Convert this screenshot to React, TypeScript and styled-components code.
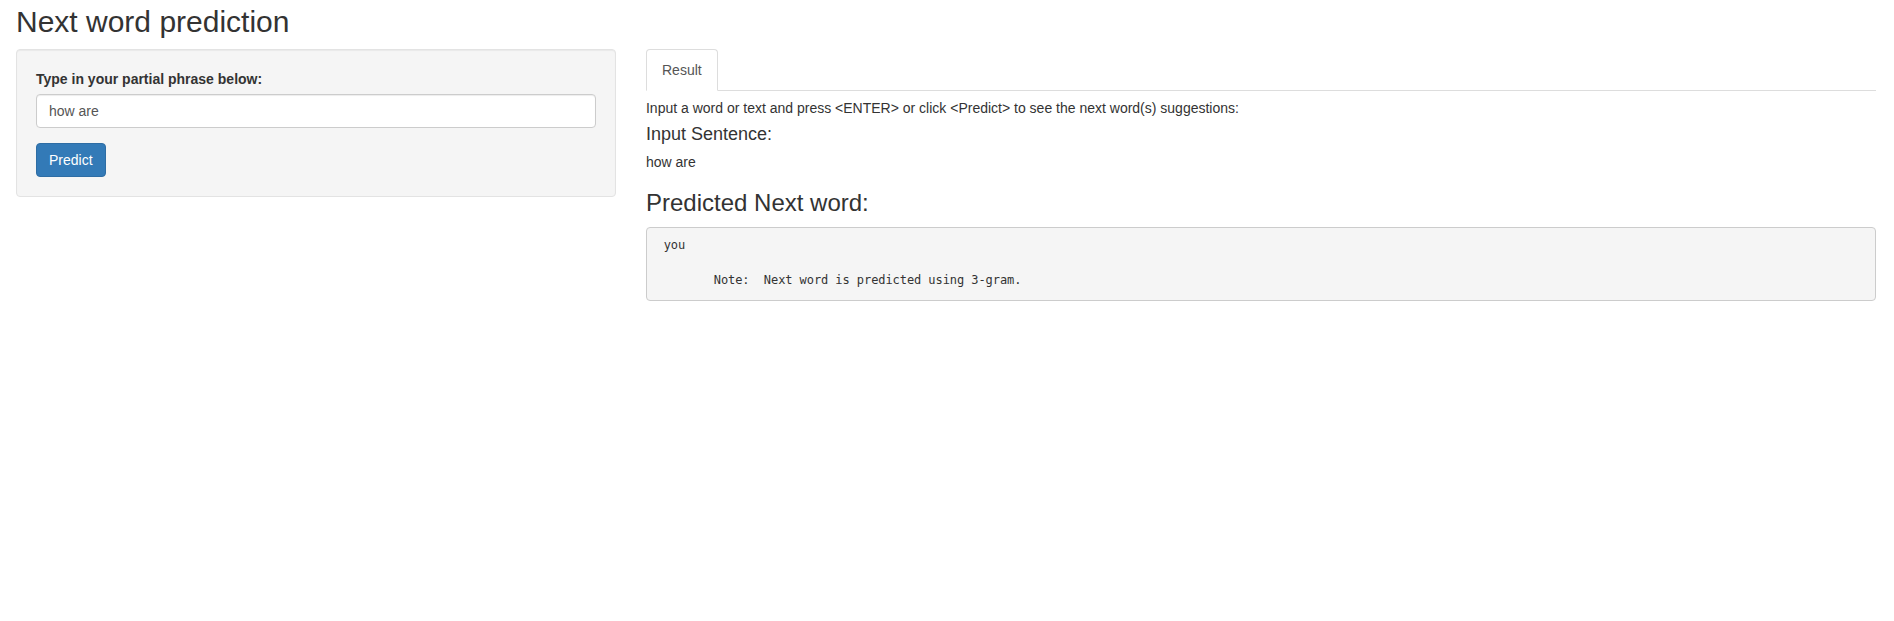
import React from "react";
import styled, { createGlobalStyle } from "styled-components";

const GlobalStyle = createGlobalStyle`
  * { box-sizing: border-box; }
  html, body { margin: 0; padding: 0; background: #fff; }
  body {
    font-family: "Liberation Sans", Arial, Helvetica, sans-serif;
    font-size: 14px;
    line-height: 1.42857143;
    color: #333;
  }
`;

const Page = styled.div`
  padding: 0 18px 0 16px;
`;

const Title = styled.h2`
  margin: 5px 0 11px;
  font-size: 30px;
  font-weight: 500;
  line-height: 1.1;
  color: #333;
`;

const Row = styled.div`
  display: grid;
  grid-template-columns: calc((100% + 30px) / 3 - 30px) 1fr;
  column-gap: 30px;
  align-items: start;
`;

const Well = styled.form`
  padding: 19px;
  background: #f5f5f5;
  border: 1px solid #e3e3e3;
  border-radius: 4px;
  box-shadow: inset 0 1px 1px rgba(0, 0, 0, 0.05);
`;

const FormGroup = styled.div`
  margin-bottom: 15px;
`;

const Label = styled.label`
  display: inline-block;
  margin-bottom: 5px;
  font-weight: bold;
`;

const TextInput = styled.input`
  display: block;
  width: 100%;
  height: 34px;
  padding: 6px 12px;
  font-family: inherit;
  font-size: 14px;
  line-height: 1.42857143;
  color: #555;
  background: #fff;
  border: 1px solid #ccc;
  border-radius: 4px;
  box-shadow: inset 0 1px 1px rgba(0, 0, 0, 0.075);
  outline: none;
`;

const PrimaryButton = styled.button`
  display: inline-block;
  padding: 6px 12px;
  font-family: inherit;
  font-size: 14px;
  line-height: 1.42857143;
  color: #fff;
  background: #337ab7;
  border: 1px solid #2e6da4;
  border-radius: 4px;
  cursor: pointer;
`;

const Tabs = styled.ul`
  display: flex;
  margin: 0;
  padding: 0;
  list-style: none;
  border-bottom: 1px solid #ddd;
`;

const TabItem = styled.li`
  margin-bottom: -1px;
`;

const TabLink = styled.a<{ $active?: boolean }>`
  display: block;
  margin-right: 2px;
  padding: 10px 15px;
  line-height: 1.42857143;
  color: ${(p) => (p.$active ? "#555" : "#337ab7")};
  background: #fff;
  border: 1px solid ${(p) => (p.$active ? "#ddd" : "transparent")};
  border-bottom-color: transparent;
  border-radius: 4px 4px 0 0;
  text-decoration: none;
  cursor: default;
`;

const Instruction = styled.h5`
  margin: 10px 0 9px;
  font-size: 14px;
  font-weight: 500;
  line-height: 1.1;
`;

const SubHeading = styled.h4`
  margin: 0;
  font-size: 18px;
  font-weight: 500;
  line-height: 1.1;
`;

const OutputText = styled.div`
  margin-top: 7px;
`;

const SectionHeading = styled.h3`
  margin: 18px 0 10px;
  font-size: 24px;
  font-weight: 500;
  line-height: 1.1;
`;

const Verbatim = styled.pre`
  margin: 0;
  padding: 9.5px;
  font-family: "DejaVu Sans Mono", "Liberation Mono", monospace;
  font-size: 12px;
  letter-spacing: -0.07px;
  line-height: 17.67px;
  color: #333;
  background: #f5f5f5;
  border: 1px solid #ccc;
  border-radius: 4px;
  white-space: pre-wrap;
  word-break: break-all;
`;

export default function App() {
  const [phrase, setPhrase] = React.useState("how are");
  return (
    <>
      <GlobalStyle />
      <Page>
        <Title>Next word prediction</Title>
        <Row>
          <Well onSubmit={(e) => e.preventDefault()}>
            <FormGroup>
              <Label htmlFor="phrase">Type in your partial phrase below:</Label>
              <TextInput
                id="phrase"
                type="text"
                value={phrase}
                onChange={(e) => setPhrase(e.target.value)}
              />
            </FormGroup>
            <PrimaryButton type="submit">Predict</PrimaryButton>
          </Well>
          <div>
            <Tabs>
              <TabItem>
                <TabLink $active>Result</TabLink>
              </TabItem>
            </Tabs>
            <Instruction>
              Input a word or text and press &lt;ENTER&gt; or click &lt;Predict&gt; to see the next
              word(s) suggestions:
            </Instruction>
            <SubHeading>Input Sentence:</SubHeading>
            <OutputText>how are</OutputText>
            <SectionHeading>Predicted Next word:</SectionHeading>
            <Verbatim>{" you\n\n        Note:  Next word is predicted using 3-gram."}</Verbatim>
          </div>
        </Row>
      </Page>
    </>
  );
}
